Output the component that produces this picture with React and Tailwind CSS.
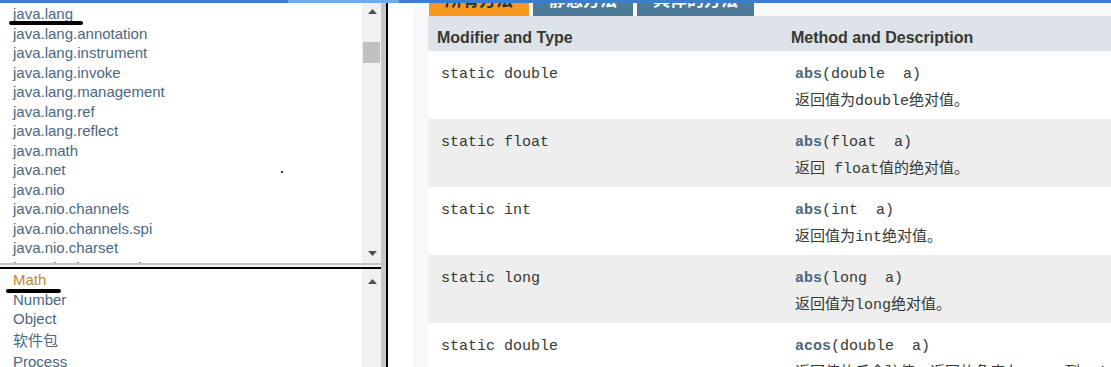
import React from "react";

const pkgs = [
  "java.lang",
  "java.lang.annotation",
  "java.lang.instrument",
  "java.lang.invoke",
  "java.lang.management",
  "java.lang.ref",
  "java.lang.reflect",
  "java.math",
  "java.net",
  "java.nio",
  "java.nio.channels",
  "java.nio.channels.spi",
  "java.nio.charset",
  "java.nio.charset.spi",
];

const classes = ["Math", "Number", "Object", "软件包", "Process", "ProcessBuilder"];

const rows = [
  { type: "static double", name: "abs", args: "(double  a)", desc: "返回值为double绝对值。" },
  { type: "static float", name: "abs", args: "(float  a)", desc: "返回 float值的绝对值。" },
  { type: "static int", name: "abs", args: "(int  a)", desc: "返回值为int绝对值。" },
  { type: "static long", name: "abs", args: "(long  a)", desc: "返回值为long绝对值。" },
  { type: "static double", name: "acos", args: "(double  a)", desc: "返回值的反余弦值；返回的角度在 0.0 到 pi 之间。" },
];

function Tri({ down }) {
  return (
    <svg width="9" height="5" viewBox="0 0 9 5" className="block">
      {down ? (
        <path d="M0 0 L9 0 L4.5 5 Z" fill="#505050" />
      ) : (
        <path d="M0 5 L4.5 0 L9 5 Z" fill="#505050" />
      )}
    </svg>
  );
}

export default function App() {
  return (
    <div className="relative h-[367px] w-[1111px] overflow-hidden bg-white font-[family-name:Liberation_Sans,Noto_Sans_CJK_SC,sans-serif]">
      {/* top bar */}
      <div className="flex h-[3px]">
        <div className="w-[288px] bg-[#3a7fcf]" />
        <div className="w-[111px] bg-[#6aaef2]" />
        <div className="flex-1 bg-[#3a7fcf]" />
      </div>

      <div className="flex h-[364px]">
        {/* left frames */}
        <div className="flex w-[388px] shrink-0">
          <div className="flex w-[381px] flex-col">
            {/* package frame */}
            <div className="flex h-[260px] shrink-0">
              <div className="relative flex-1 overflow-hidden pl-[13px] pt-[1px]">
                {pkgs.map((p) => (
                  <div key={p} className="whitespace-nowrap text-[15px] leading-[19.5px] text-[#4a6782]">
                    {p}
                  </div>
                ))}
                <span className="absolute left-[9px] top-[18px] h-[4px] w-[74px] rounded-full bg-black" />
                <span className="absolute left-[281px] top-[168px] h-[2px] w-[2px] bg-[#333]" />
              </div>
              <div className="flex w-[19px] flex-col bg-[#f0f0f0]">
                <div className="flex h-[16px] items-center justify-center pt-[1px] pl-[1px]">
                  <Tri />
                </div>
                <div className="mx-[1px] mt-[23px] h-[21px] w-[17px] bg-[#c1c1c1]" />
                <div className="flex-1" />
                <div className="flex h-[16px] items-center justify-center pb-[3px] pl-[1px]">
                  <Tri down />
                </div>
              </div>
            </div>
            <div className="h-[2px] shrink-0 bg-[#c4c4c4]" />
            <div className="h-[2px] shrink-0 bg-[#f3f3f3]" />
            <div className="h-[2px] shrink-0 bg-black" />
            {/* class frame */}
            <div className="flex min-h-0 flex-1">
              <div className="relative flex-1 overflow-hidden pl-[13px] pt-[1px]">
                {classes.map((c, i) => (
                  <div
                    key={c}
                    className={
                      "whitespace-nowrap text-[15px] " +
                      (i === 3 ? "leading-[23px] " : "leading-[19.5px] ") +
                      (i === 0 ? "text-[#c4843a]" : "text-[#4a6782]")
                    }
                  >
                    {c}
                  </div>
                ))}
                <span className="absolute left-[6px] top-[20px] h-[4px] w-[55px] rounded-full bg-black" />
              </div>
              <div className="flex w-[19px] flex-col bg-[#f0f0f0]">
                <div className="flex h-[24px] items-center justify-center pl-[1px]">
                  <Tri />
                </div>
              </div>
            </div>
          </div>
          <div className="w-[5px] bg-[#c6c6c6]" />
          <div className="w-[2px] bg-black" />
        </div>

        {/* right content */}
        <div className="w-[25px] shrink-0 bg-white" />
        <div className="min-w-0 flex-1 overflow-hidden bg-[#f8f8f8] pl-[15px]">
          <div className="-mt-[17px] flex h-[30px] gap-[4px] pl-[1px] text-[17px] font-bold">
            <div className="flex w-[100px] items-center justify-center bg-[#f8981d] text-[#253441]">所有方法</div>
            <div className="flex w-[100px] items-center justify-center bg-[#4d7a97] text-white">静态方法</div>
            <div className="flex w-[117px] items-center justify-center bg-[#4d7a97] text-white">具体的方法</div>
          </div>
          <div className="w-[720px] bg-white">
            <div className="flex h-[35px] bg-[#dee3e9] text-[16px] font-bold leading-[20px] text-[#353833]">
              <div className="w-[354px] shrink-0 pl-[9px] pt-[12px]">Modifier and Type</div>
              <div className="min-w-0 flex-1 pl-[9px] pt-[12px]">Method and Description</div>
            </div>
            {rows.map((r, i) => (
              <div
                key={i}
                className={
                  "flex h-[68px] font-[family-name:Liberation_Mono,Noto_Sans_CJK_SC,monospace] text-[15px] leading-[20px] text-[#353833] " +
                  (i % 2 === 1 ? "bg-[#eeeeef]" : "bg-white")
                }
              >
                <div className="w-[354px] shrink-0 whitespace-pre pl-[13px] pt-[14px]">{r.type}</div>
                <div className="min-w-0 flex-1 pl-[13px] pt-[14px]">
                  <div className="whitespace-pre">
                    <span className="font-bold text-[#4a6782]">{r.name}</span>
                    {r.args}
                  </div>
                  <div className="mt-[7px] whitespace-nowrap">{r.desc}</div>
                </div>
              </div>
            ))}
          </div>
        </div>
      </div>
    </div>
  );
}
